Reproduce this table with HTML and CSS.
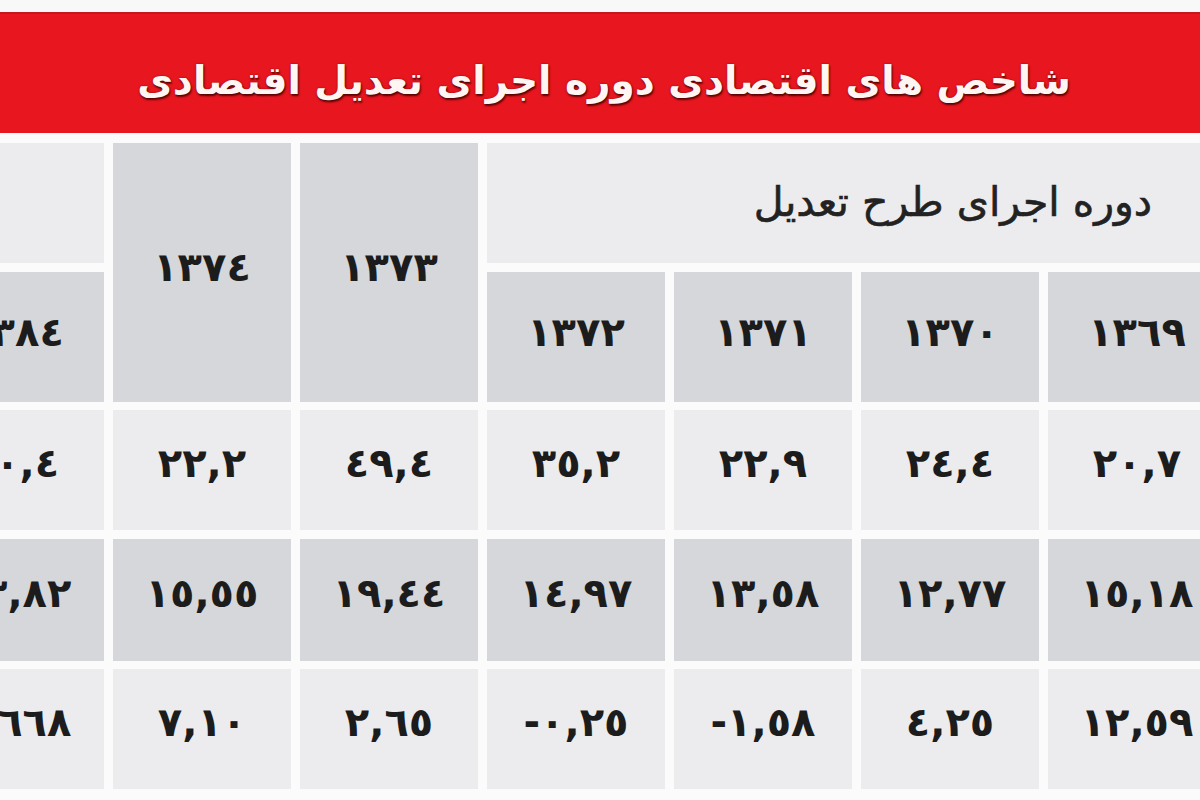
FILE: index.html
```html
<!DOCTYPE html>
<html lang="fa">
<head>
<meta charset="utf-8">
<title>شاخص های اقتصادی دوره اجرای تعدیل اقتصادی</title>
<link rel="stylesheet" href="styles.css">
</head>
<body>
<div class="page">
  <div class="banner">
    <h1 class="title" dir="rtl">شاخص های اقتصادی دوره اجرای تعدیل اقتصادی</h1>
  </div>
  <div class="table-wrap">
    <div class="grid" dir="rtl">
      <div class="cell light period">دوره اجرای طرح تعدیل</div>
      <div class="cell gray year tall c5">١٣٧٣</div>
      <div class="cell gray year tall c6">١٣٧٤</div>
      <div class="cell light c7"></div>

      <div class="cell gray year">١٣٦٩</div>
      <div class="cell gray year">١٣٧٠</div>
      <div class="cell gray year">١٣٧١</div>
      <div class="cell gray year">١٣٧٢</div>
      <div class="cell gray year c7">١٣٨٤</div>

      <div class="cell light num"><span>٢٠,٧</span></div>
      <div class="cell light num"><span>٢٤,٤</span></div>
      <div class="cell light num"><span>٢٢,٩</span></div>
      <div class="cell light num"><span>٣٥,٢</span></div>
      <div class="cell light num"><span>٤٩,٤</span></div>
      <div class="cell light num"><span>٢٢,٢</span></div>
      <div class="cell light num"><span>٢٠,٤</span></div>

      <div class="cell gray num"><span>١٥,١٨</span></div>
      <div class="cell gray num"><span>١٢,٧٧</span></div>
      <div class="cell gray num"><span>١٣,٥٨</span></div>
      <div class="cell gray num"><span>١٤,٩٧</span></div>
      <div class="cell gray num"><span>١٩,٤٤</span></div>
      <div class="cell gray num"><span>١٥,٥٥</span></div>
      <div class="cell gray num"><span>١٣,٨٢</span></div>

      <div class="cell light num"><span>١٢,٥٩</span></div>
      <div class="cell light num"><span>٤,٢٥</span></div>
      <div class="cell light num"><span>-١,٥٨</span></div>
      <div class="cell light num"><span>-٠,٢٥</span></div>
      <div class="cell light num"><span>٢,٦٥</span></div>
      <div class="cell light num"><span>٧,١٠</span></div>
      <div class="cell light num"><span>٠,٦٦٨</span></div>
    </div>
  </div>
</div>
</body>
</html>
```

FILE: styles.css
```css
html, body {
  margin: 0;
  padding: 0;
}

body {
  background: #f8f8f8;
  font-family: "DejaVu Sans", "Noto Sans", sans-serif;
  color: #1a1a1a;
}

.page {
  width: 1200px;
  height: 800px;
  overflow: hidden;
  padding-top: 12px;
  box-sizing: border-box;
}

.banner {
  height: 121px;
  background: #e8161f;
  border-top: 2px solid #c8141b;
  box-sizing: border-box;
  display: flex;
  align-items: center;
  justify-content: center;
}

.title {
  margin: 14px 0 0 8px;
  font-family: "DejaVu Sans", sans-serif;
  font-weight: bold;
  font-size: 39px;
  color: #fff6f4;
  text-shadow: 1px 2px 2px rgba(70, 0, 0, 0.85), 0 0 2px rgba(70, 0, 0, 0.6);
  letter-spacing: -0.5px;
}

.table-wrap {
  padding-top: 10px;
  background: #fbfbfb;
  overflow: hidden;
  direction: rtl;
}

.grid {
  display: grid;
  grid-template-columns: repeat(7, 178px);
  grid-template-rows: 120px 130px 120px 122px 120px;
  column-gap: 9px;
  row-gap: 8.5px;
  width: 1300px;
  margin-right: -26px;
  padding-bottom: 12px;
}

.cell {
  display: flex;
  align-items: center;
  justify-content: center;
  box-sizing: border-box;
}

.light {
  background: #ececee;
}

.gray {
  background: #d5d7da;
}

.period {
  grid-column: 1 / span 4;
  grid-row: 1;
  justify-content: flex-start;
  align-items: flex-start;
  padding: 35px 74px 0 0;
  font-size: 41px;
  color: #222;
  -webkit-text-stroke: 0.6px #222;
}

.tall {
  grid-row: 1 / span 2;
}

.c5 {
  grid-column: 5;
}

.c6 {
  grid-column: 6;
}

.c7 {
  grid-column: 7;
}

.year {
  font-weight: bold;
  font-size: 40px;
  color: #1c1c1c;
  padding-bottom: 10px;
}

.num {
  font-weight: bold;
  font-size: 40px;
  color: #1c1c1c;
  padding-bottom: 14px;
}

.num span {
  direction: ltr;
  unicode-bidi: isolate;
}
```
